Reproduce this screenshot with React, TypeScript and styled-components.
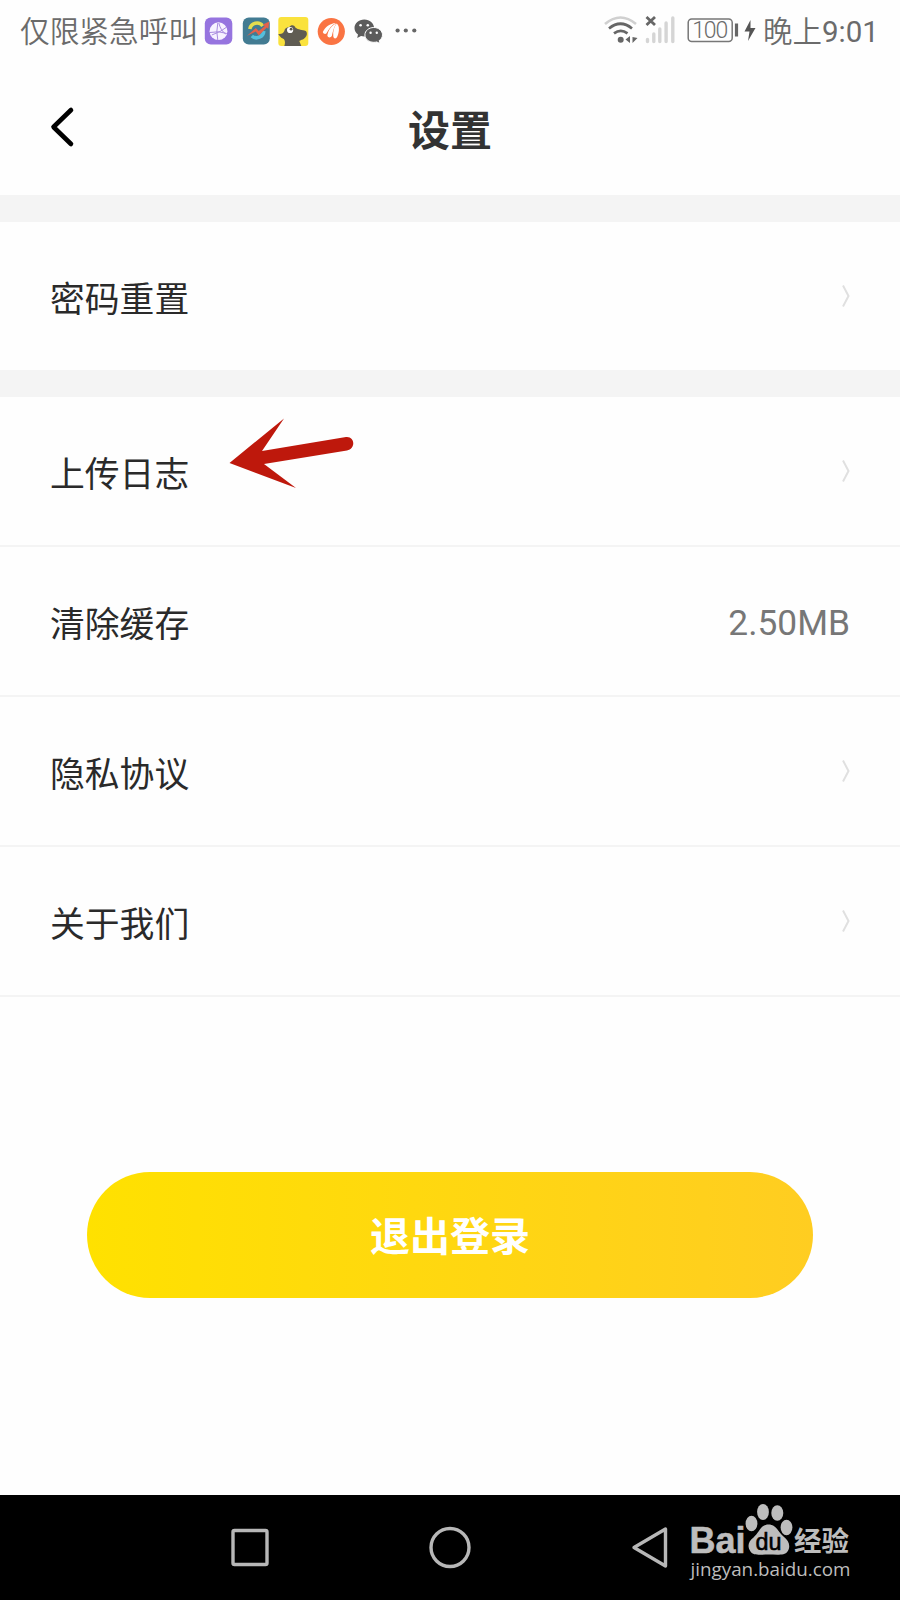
import React from "react";
import styled, { createGlobalStyle } from "styled-components";

const Global = createGlobalStyle`
  * { box-sizing: border-box; }
  body { margin: 0; background: #fefefe; }
`;

const Screen = styled.div`
  width: 900px;
  height: 1600px;
  display: flex;
  flex-direction: column;
  background: #fefefe;
  font-family: Roboto, "Noto Sans CJK SC", sans-serif;
  overflow: hidden;
`;

const StatusBar = styled.header`
  height: 62px;
  flex: none;
  padding: 0 22px 0 20px;
  display: flex;
  align-items: center;
  justify-content: space-between;
  color: #6b6b6b;
`;

const StatusGroup = styled.div`
  display: flex;
  align-items: center;
`;

const StatusText = styled.span<{ $size: number; $width?: number }>`
  font-size: ${(p) => p.$size}px;
  width: ${(p) => (p.$width ? `${p.$width}px` : "auto")};
  line-height: 40px;
  font-weight: 350;
  padding-top: 2px;
  white-space: nowrap;
`;

const Clock = styled.span`
  font-weight: 400;
`;

const TitleBar = styled.div`
  height: 133px;
  flex: none;
  display: grid;
  grid-template-columns: 150px 1fr 150px;
  align-items: center;
`;

const BackButton = styled.button`
  border: 0;
  background: none;
  padding: 0 0 3px 48px;
  height: 48px;
  display: flex;
  align-items: center;
`;

const Title = styled.h1`
  margin: 7px 0 0;
  text-align: center;
  font-size: 42px;
  line-height: 60px;
  font-weight: 700;
  color: #333;
`;

const Gap = styled.div`
  height: 27px;
  flex: none;
  background: #f4f4f4;
`;

const List = styled.div`
  flex: none;
`;

const Row = styled.div<{ $height: number; $line?: boolean }>`
  height: ${(p) => p.$height}px;
  padding: 0 50px;
  display: flex;
  align-items: center;
  justify-content: space-between;
  border-bottom: ${(p) => (p.$line ? "2px solid #f4f4f4" : "0")};
`;

const Label = styled.span`
  position: relative;
  padding-top: 8px;
  font-size: 34.8px;
  line-height: 50px;
  color: #2a2a2a;
`;

const Value = styled.span`
  padding-top: 4px;
  font-size: 35.3px;
  line-height: 50px;
  color: #777;
`;

const Pointer = styled.svg`
  position: absolute;
  left: 174px;
  top: -30px;
`;

const Actions = styled.div`
  flex: 1;
  padding: 175px 87px 0;
`;

const LogoutButton = styled.button`
  width: 100%;
  height: 126px;
  border: 0;
  border-radius: 63px;
  padding: 6px 0 0;
  background: linear-gradient(90deg, #ffe100, #ffcd21);
  color: #fff;
  font-family: inherit;
  font-size: 40px;
  font-weight: 700;
  line-height: 58px;
`;

const NavBar = styled.nav`
  height: 105px;
  flex: none;
  display: flex;
  background: #000;
  padding-left: 230px;
`;

const NavIcon = styled.svg<{ $after: number }>`
  flex: none;
  margin: 30px ${(p) => p.$after}px 0 0;
`;

const Watermark = styled.div`
  width: 170px;
  padding-top: 7px;
  color: #b9b9b9;
`;

const WatermarkLogo = styled.svg`
  display: block;
`;

const Chevron = () => (
  <svg width="10" height="24" viewBox="0 0 10 24" fill="none" stroke="#e0e0e0" strokeWidth="2">
    <path d="M3 1.500 8.500 12 3 22.500" />
  </svg>
);

const AppIcons = () => (
  <svg width="220" height="36" viewBox="198.2 12 220 36">
    <rect x="205" y="16.500" width="27.5" height="27" rx="6" fill="#9674df" />
    <circle cx="218.7" cy="30.2" r="8.9" fill="#f7f2ff" />
    <path d="M210 31.500q9-2 17 1M218 22q-2 9 0 17M219 22q2 8 7 11M227 26q-6 5-15 8" stroke="#a88bdf" strokeWidth="1" fill="none" />
    <rect x="243" y="16.500" width="27" height="27" rx="6" fill="#427b92" />
    <path d="M250 28a7.300 7.300 0 0 1 13-3" stroke="#e4dc4e" strokeWidth="3.600" fill="none" />
    <path d="M264 30a7.300 7.300 0 0 1-12 5" stroke="#54bfdc" strokeWidth="3.600" fill="none" />
    <path d="m247 35 9-8 3 3 6-5-2-1.500 6.500-3-1 7.500-1.500-1.500-8 8-3-4z" fill="#e4624b" />
    <rect x="278.500" y="16" width="30" height="29" rx="3" fill="#fae23d" />
    <path d="M278.500 33c3.500.5 5-1 6-3 .5-3 3-4 5-4 1.500-2.500 5-2.500 6 .500 3 2.500 7 2 10.500 3.500 2 2 1 5-.5 6.500-2 2.500-5 2.500-6 3.500l2 5h-17c1-3 1-5-.500-7-2-1-3.500-1.500-5.500-5z" fill="#5f5c52" />
    <circle cx="290.300" cy="29" r="3.100" fill="#fff" />
    <circle cx="291.300" cy="28.200" r="1.400" fill="#5c5950" />
    <circle cx="331.500" cy="30.500" r="13.600" fill="#fa7443" />
    <g fill="#fff">
      <path d="M323 31c2.500-5 7-8.500 13-9-4 2-7 6-9.500 10.500-1 1-3 .5-3.500-1.500z" />
      <path d="M327.500 34.500c1-5.500 4-10 9-12-2.500 4-3.500 8-4.500 12.500-1 2-4 2-4.500-.5z" />
      <path d="M333.500 35.500c-.5-5 .5-9.500 3.500-13 3 3 2.500 8 .5 13-1 2.500-3.500 2.500-4 0z" />
    </g>
    <path d="M364.500 18.500c-5.600 0-9.800 3.800-9.800 8.500 0 2.800 1.400 5 3.500 6.600l-.8 3.400 3.800-2c1 .3 2.200.5 3.300.5 5.400 0 9.800-3.700 9.800-8.500s-4.400-8.500-9.800-8.500z" fill="#5c5c5c" />
    <path d="M374 26.500c-5 0-8.900 3.300-8.900 7.400s4 7.400 8.900 7.400c1 0 2-.1 2.900-.4l3.300 1.700-.8-3c2-1.300 3.300-3.400 3.300-5.700 0-4.100-3.900-7.400-8.700-7.400z" fill="#5c5c5c" stroke="#fefefe" strokeWidth="1" />
    <g fill="#fefefe">
      <circle cx="360.800" cy="24.200" r="1.300" />
      <circle cx="368" cy="24.200" r="1.300" />
      <circle cx="370.800" cy="31.700" r="1.200" />
      <circle cx="377" cy="31.700" r="1.200" />
    </g>
    <g fill="#666">
      <circle cx="397.800" cy="29.500" r="2.100" />
      <circle cx="406" cy="29.500" r="2.100" />
      <circle cx="414.500" cy="29.500" r="2.100" />
    </g>
  </svg>
);

const SystemIcons = () => (
  <svg width="160" height="40" viewBox="602.5 11 160 40" fill="none">
    <path d="M604.500 24q15.500-13 31 0" stroke="#d0d0d0" strokeWidth="2.600" />
    <path d="M608.500 28.500q11.500-9.500 23 0M613.500 33.300q6.800-5 13.500 0" stroke="#666" strokeWidth="2.700" />
    <circle cx="620.200" cy="39.700" r="3" fill="#666" />
    <path d="M629.500 36v7l-4.500-3.500zM632 37v6l5-5z" fill="#666" />
    <path d="m646 17 8.500 8M654.500 17l-8.500 8" stroke="#666" strokeWidth="2.800" />
    <path d="M647 39.500v2M653.300 34v7.500M659.300 29v12.500M665.600 23v18.500M672.300 18v23.500" stroke="#d5d5d5" strokeWidth="3.400" strokeLinecap="round" />
    <rect x="687.700" y="19" width="44" height="22.500" rx="3.500" stroke="#777" strokeWidth="1.500" />
    <path d="M736 23.500v13" stroke="#666" strokeWidth="3.200" />
    <path d="m750 20-6 11.500h5L747.500 41l7.500-13h-5z" fill="#555" />
    <text x="709.700" y="38.300" textAnchor="middle" fontFamily="Roboto, sans-serif" fontSize="23" fontWeight="350" textLength="36" fill="#6b6b6b">100</text>
  </svg>
);

const rows = [
  { label: "上传日志", pointer: true },
  { label: "清除缓存", value: "2.50MB" },
  { label: "隐私协议" },
  { label: "关于我们" },
];

export default function App() {
  return (
    <Screen>
      <Global />
      <StatusBar>
        <StatusGroup>
          <StatusText $size={29.7}>仅限紧急呼叫</StatusText>
          <AppIcons />
        </StatusGroup>
        <StatusGroup>
          <SystemIcons />
          <StatusText $size={29.5} $width={115}>
            晚上<Clock>9:01</Clock>
          </StatusText>
        </StatusGroup>
      </StatusBar>
      <TitleBar>
        <BackButton aria-label="返回">
          <svg width="28" height="42" viewBox="0 0 28 42" fill="none" stroke="#000" strokeWidth="4.600" strokeLinecap="round" strokeLinejoin="round">
            <path d="M23 4 5.500 21 23 38" />
          </svg>
        </BackButton>
        <Title>设置</Title>
      </TitleBar>
      <Gap />
      <List>
        <Row $height={148}>
          <Label>密码重置</Label>
          <Chevron />
        </Row>
      </List>
      <Gap />
      <List>
        {rows.map((row) => (
          <Row key={row.label} $height={150} $line>
            <Label>
              {row.label}
              {row.pointer && (
                <Pointer width="136" height="76" viewBox="224 412 136 76">
                  <path d="M229.500 463 284 418.500 262 451l84-14c9-1 10 12 1 13.500L264 464l32 24z" fill="#be180c" />
                </Pointer>
              )}
            </Label>
            {row.value ? <Value>{row.value}</Value> : <Chevron />}
          </Row>
        ))}
      </List>
      <Actions>
        <LogoutButton>退出登录</LogoutButton>
      </Actions>
      <NavBar>
        <NavIcon $after={158} width="40" height="45" viewBox="0 0 40 45" fill="none" stroke="#b7b7b7" strokeWidth="3.400">
          <rect x="3" y="5.500" width="34" height="34" rx="1.500" />
        </NavIcon>
        <NavIcon $after={158} width="44" height="45" viewBox="0 0 44 45" fill="none" stroke="#b7b7b7" strokeWidth="3.400">
          <circle cx="22" cy="22.500" r="19" />
        </NavIcon>
        <NavIcon $after={18} width="40" height="45" viewBox="0 0 40 45" fill="none" stroke="#b7b7b7" strokeWidth="3.400" strokeLinejoin="round">
          <path d="M35.500 4v37L4 22.500z" />
        </NavIcon>
        <Watermark>
          <WatermarkLogo width="170" height="90" viewBox="688 1502 170 90" fill="#bdbdbd">
            <g fontFamily="'Liberation Sans', sans-serif" fontWeight="700">
              <text x="689.500" y="1553" fontSize="36.500" textLength="56" lengthAdjust="spacingAndGlyphs" stroke="#bdbdbd" strokeWidth=".6">Bai</text>
              <g>
                <ellipse cx="751.500" cy="1523.500" rx="5.900" ry="7.800" />
                <ellipse cx="763" cy="1512" rx="5.900" ry="8" />
                <ellipse cx="777.300" cy="1513" rx="6" ry="7.800" />
                <ellipse cx="786.500" cy="1527.500" rx="5.900" ry="7.800" />
                <path d="M768.500 1524.500c-8 0-9 8-15 13-6 4.500-6 9.500-3 14 3 4.500 11 3 18 3s16 1.500 19-3c3.500-5 1.500-11-4-15-5-4-7-12-15-12z" />
              </g>
              <text x="755.500" y="1550" fontSize="23.500" fontWeight="400" fill="#000" stroke="#000" strokeWidth=".6" textLength="26" lengthAdjust="spacingAndGlyphs">du</text>
            </g>
            <text x="794" y="1551" fontFamily="'Noto Sans CJK SC', sans-serif" fontWeight="700" fontSize="27.500" textLength="55">经验</text>
            <text x="690.500" y="1575.500" fontFamily="'Open Sans', sans-serif" fontSize="19" fontWeight="500" textLength="160" lengthAdjust="spacingAndGlyphs">jingyan.baidu.com</text>
          </WatermarkLogo>
        </Watermark>
      </NavBar>
    </Screen>
  );
}
